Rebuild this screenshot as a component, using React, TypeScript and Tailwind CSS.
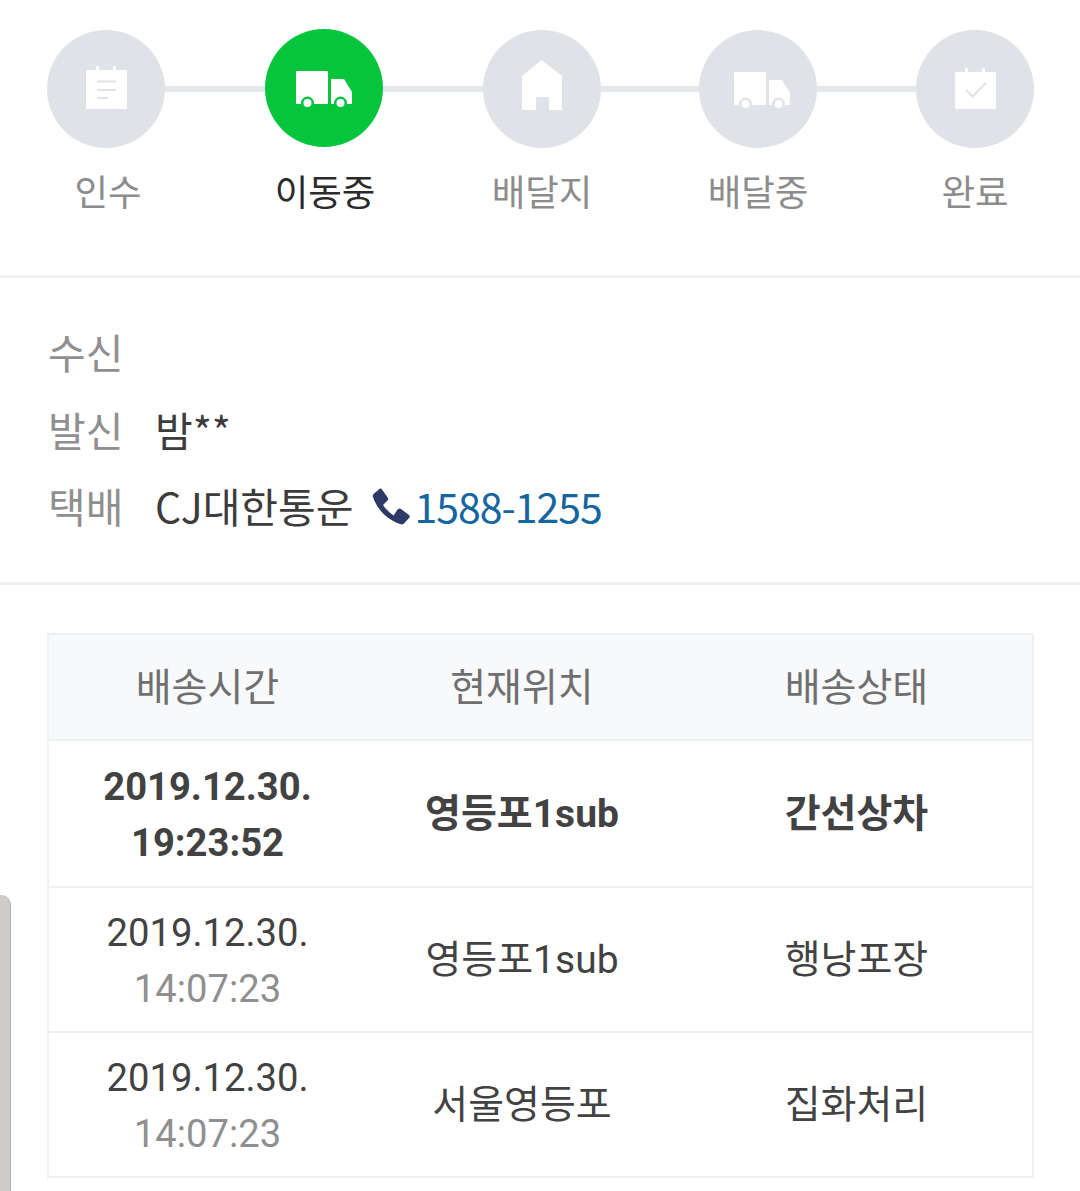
const GRAY = "#dfe2e6";

const Clipboard = () => (
  <svg viewBox="0 0 118 118" className="h-full w-full">
    <path d="M39 40h10v-4h3v4h14v-4h3v4h11v39H39z" fill="#fff" />
    <path d="M50 51.500h19M50 60h19M50 68h11" stroke={GRAY} strokeWidth="2" fill="none" />
  </svg>
);

const Truck = ({ dx, bg }: { dx: number; bg: string }) => (
  <svg viewBox="0 0 118 118" className="h-full w-full">
    <g transform={`translate(${dx} 0)`}>
      <rect x="31" y="42" width="32" height="33" rx="1" fill="#fff" />
      <path d="M66 50h13l8 13v12H66z" fill="#fff" />
      <circle cx="42.500" cy="74" r="6.500" fill={bg} />
      <circle cx="42.500" cy="74" r="4" fill="#fff" />
      <circle cx="75.500" cy="74" r="6.500" fill={bg} />
      <circle cx="75.500" cy="74" r="4" fill="#fff" />
    </g>
  </svg>
);

const House = () => (
  <svg viewBox="0 0 118 118" className="h-full w-full">
    <path d="M58.500 30L79 46v34H66V67H53v13H39V46z" fill="#fff" />
  </svg>
);

const CalendarCheck = () => (
  <svg viewBox="0 0 118 118" className="h-full w-full">
    <path d="M39 42h10v-4h3v4h14v-4h3v4h11v37H39z" fill="#fff" />
    <path d="M50 60l6.500 6.500L70 53" stroke={GRAY} strokeWidth="2" fill="none" />
  </svg>
);

const Phone = () => (
  <svg viewBox="0 0 38 38" className="ml-[18px] mr-[5px] mt-[4px] h-[38px] w-[38px]">
    <path
      d="M1.500 6L8 .5Q9 0 10 1.500L16 10Q16.500 11.500 15.500 12.500L11 17Q15 23 21.500 27.500L26 21Q27.500 20 29 21L37 27Q38.500 28.500 37 30L32 35.500Q30.500 37 28 36C14 31 5 21 1 9Q.5 7 1.500 6Z"
      fill="#2c3a66"
    />
  </svg>
);

const steps = [
  { label: "인수", icon: <Clipboard />, line: "", shift: "pl-[4px]" },
  { label: "이동중", icon: <Truck dx={0} bg="#06c43c" />, active: true, line: "w-[100px]", shift: "pl-[2px]" },
  { label: "배달지", icon: <House />, line: "w-[100px]", shift: "" },
  { label: "배달중", icon: <Truck dx={4} bg={GRAY} />, line: "w-[98px]", shift: "" },
  { label: "완료", icon: <CalendarCheck />, line: "w-[99px]", shift: "" },
];

const rows = [
  { date: "2019.12.30.", time: "19:23:52", place: "영등포1sub", status: "간선상차", bold: true },
  { date: "2019.12.30.", time: "14:07:23", place: "영등포1sub", status: "행낭포장" },
  { date: "2019.12.30.", time: "14:07:23", place: "서울영등포", status: "집화처리" },
];

export default function App() {
  return (
    <div className="relative h-[1191px] w-[1080px] overflow-hidden bg-white font-['Roboto','Noto_Sans_CJK_KR',sans-serif]">
      {/* 배송 단계 */}
      <div className="h-[275px] pl-[47px] pt-[30px]">
        <div className="flex">
          {steps.map((step) => (
            <div key={step.label} className="flex">
              {step.line && <div className={`mt-[56px] h-[6px] bg-[#e4e8ea] ${step.line}`} />}
              <div className="w-[118px]">
                <div
                  className={
                    step.active
                      ? "-mt-px h-[118px] w-[118px] rounded-full bg-[#06c43c]"
                      : "h-[118px] w-[118px] rounded-full bg-[#dfe2e6]"
                  }
                >
                  {step.icon}
                </div>
                <p
                  className={
                    step.active
                      ? `-mx-4 mt-[19px] text-center font-['Noto_Sans_CJK_KR',sans-serif] text-[36.5px] leading-[50px] text-[#2b2b2b] ${step.shift}`
                      : `-mx-4 mt-[18px] text-center font-['Noto_Sans_CJK_KR',sans-serif] text-[36.5px] leading-[50px] text-[#8c8c8c] ${step.shift}`
                  }
                >
                  {step.label}
                </p>
              </div>
            </div>
          ))}
        </div>
      </div>

      {/* 수신 / 발신 / 택배 */}
      <div className="h-[310px] border-y-[3px] border-[#eef1f2] px-[48px] pt-[34px] font-['Noto_Sans_CJK_KR',sans-serif] text-[41px] leading-[78px]">
        <div className="flex">
          <span className="w-[107px] text-[#8f8f8f]">수신</span>
        </div>
        <div className="flex">
          <span className="w-[107px] text-[#8f8f8f]">발신</span>
          <span className="text-[#3c3c3c]">밤**</span>
        </div>
        <div className="-mt-[2px] flex items-center">
          <span className="w-[107px] text-[#8f8f8f]">택배</span>
          <span className="text-[#3c3c3c]">CJ대한통운</span>
          <Phone />
          <span className="tracking-[-1px] text-[#1565a0]">1588-1255</span>
        </div>
      </div>

      {/* 배송 내역 */}
      <div className="pl-[47px] pr-[46px] pt-[48px]">
        <div className="border-2 border-[#eef1f2] text-center text-[39px] text-[#424242]">
          <div className="grid h-[104px] grid-cols-[317px_312px_1fr] items-center bg-[#f8f9fb] pt-[2px] text-[#6f6f6f]">
            <span>배송시간</span>
            <span>현재위치</span>
            <span className="pl-[3px]">배송상태</span>
          </div>
          {rows.map((row) => (
            <div
              key={row.date + row.time + row.status}
              className={
                row.bold
                  ? "grid h-[147px] grid-cols-[317px_312px_1fr] items-center border-t-2 border-[#eef1f2] pt-[2px] font-bold"
                  : "grid h-[145px] grid-cols-[317px_312px_1fr] items-center border-t-2 border-[#eef1f2] pt-[2px]"
              }
            >
              <div className="text-[38.2px] leading-[56px]">
                <p>{row.date}</p>
                <p className={row.bold ? "" : "text-[#8f8f8f]"}>{row.time}</p>
              </div>
              <span>{row.place}</span>
              <span className="pl-[3px]">{row.status}</span>
            </div>
          ))}
        </div>
      </div>

      {/* 왼쪽 가장자리 핸들 */}
      <div className="absolute bottom-0 left-0 h-[296px] w-[11px] rounded-tr-[10px] border-r border-[#b0aeac] bg-[#cfccc9]" />
    </div>
  );
}
